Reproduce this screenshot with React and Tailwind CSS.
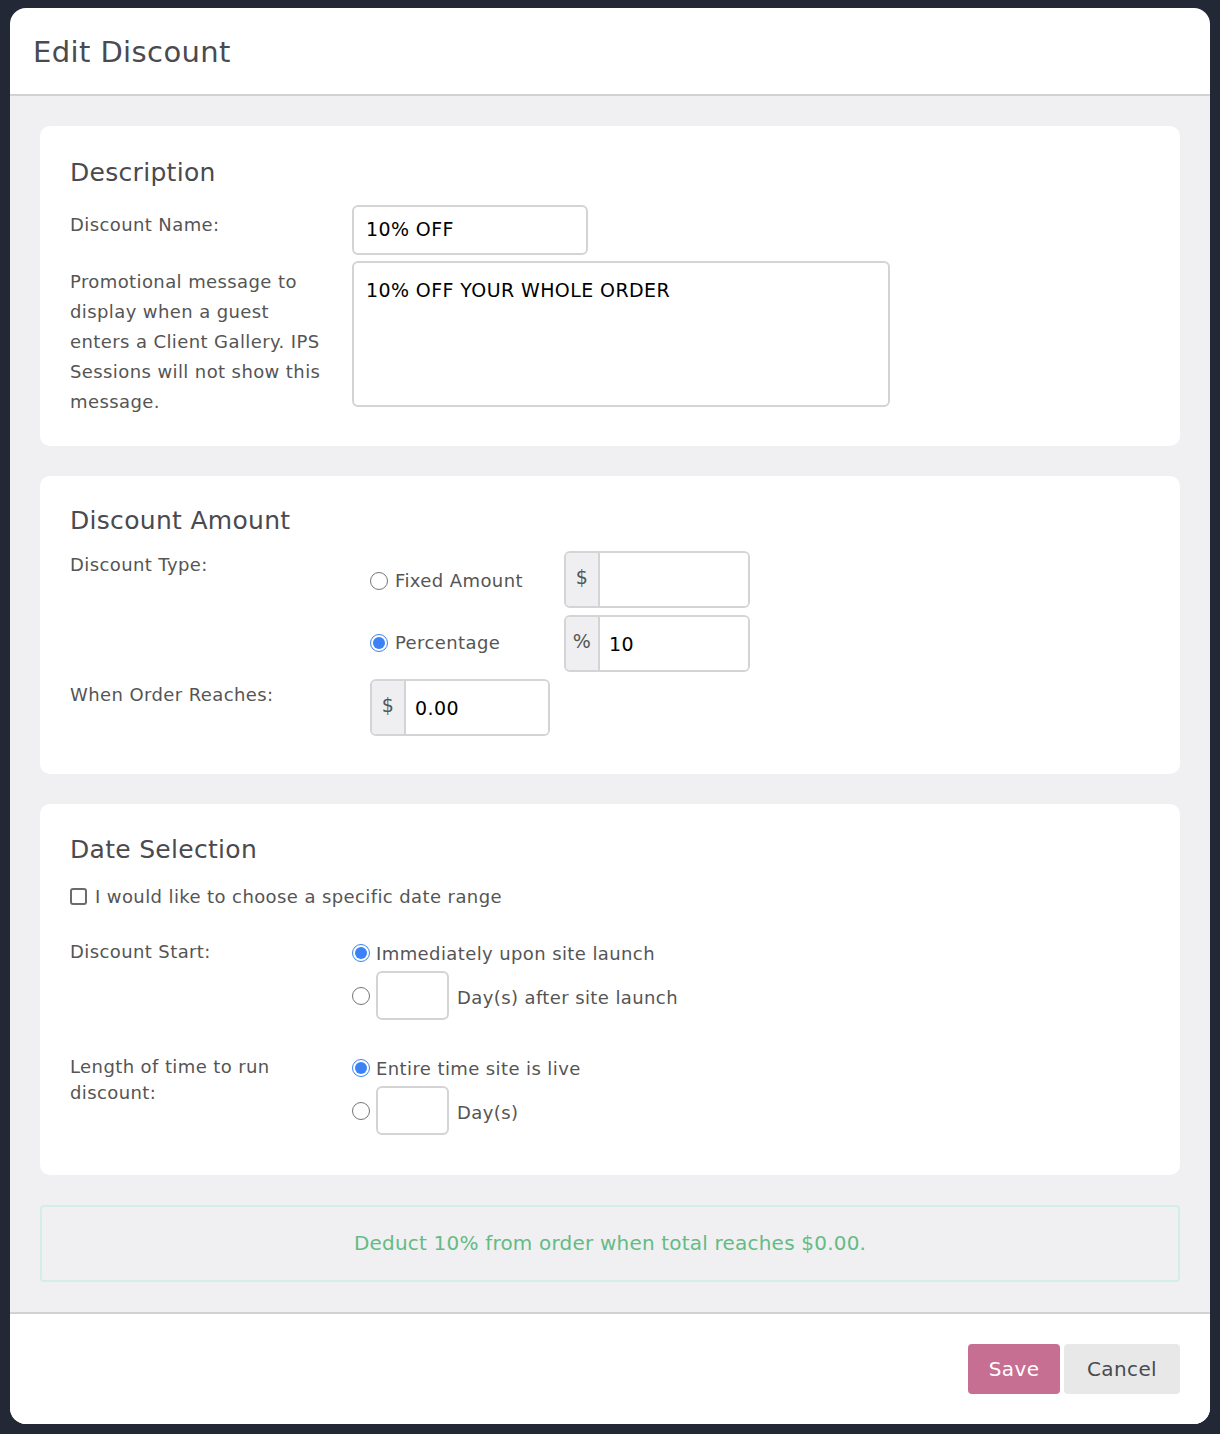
import React from 'react';

const font = { fontFamily: '"DejaVu Sans", "Noto Sans", sans-serif' };

const Radio = ({ checked }) => (
  <span
    className={
      'inline-flex h-[18px] w-[18px] shrink-0 items-center justify-center rounded-full border ' +
      (checked ? 'border-[#3b82f6] bg-white' : 'border-[#767676] bg-white')
    }
  >
    {checked && <span className="h-[12px] w-[12px] rounded-full bg-[#3b82f6]" />}
  </span>
);

const AddonInput = ({ addon, value, width }) => (
  <div className={'flex h-[57px] overflow-hidden rounded-md border-2 border-[#d4d4d6] ' + width}>
    <div className="flex w-[34px] items-start justify-center bg-[#efeff1] pt-[10px] text-[19px] text-[#555] border-r-2 border-[#d4d4d6]">
      {addon}
    </div>
    <div className="flex-1 bg-white px-[9px] pt-[13px] text-[19px] text-black">{value}</div>
  </div>
);

const SmallBox = () => (
  <div className="h-[49px] w-[73px] rounded-md border-2 border-[#d4d4d6] bg-white" />
);

const Card = ({ title, children, className = '' }) => (
  <section className={'rounded-[10px] bg-white px-[30px] ' + className}>
    <h2 className="text-[25px] tracking-[0.3px] text-[#4a4a4f]">{title}</h2>
    {children}
  </section>
);

export default function App() {
  return (
    <div className="min-h-[1434px] bg-[#222836] pt-[8px] tracking-[0.4px]" style={font}>
      <div className="mx-[10px] overflow-hidden rounded-[16px] bg-white">
        <header className="flex h-[88px] items-center border-b-2 border-[#d2d2d4] px-[23px] pt-[4px]">
          <h1 className="text-[29px] text-[#4a4a4f]">Edit Discount</h1>
        </header>

        <div className="flex flex-col gap-[30px] bg-[#f0f0f2] px-[30px] pt-[30px] pb-[30px]">
          <Card title="Description" className="pt-[28px] pb-[29px]">
            <div className="mt-[13px] grid grid-cols-[282px_1fr] gap-y-[6px] text-[18px] text-[#555]">
              <div className="pt-[6px]">Discount Name:</div>
              <div className="flex h-[50px] w-[236px] items-center rounded-md border-2 border-[#d4d4d6] px-[12px] text-[19px] text-black">
                10% OFF
              </div>
              <div className="pt-[6px] pr-[18px] leading-[30px]">
                Promotional message to display when a guest enters a Client Gallery. IPS Sessions will not show this message.
              </div>
              <div className="h-[146px] w-[538px] rounded-md border-2 border-[#d4d4d6] px-[12px] pt-[13px] text-[19px] text-black">
                10% OFF YOUR WHOLE ORDER
              </div>
            </div>
          </Card>

          <Card title="Discount Amount" className="pt-[26px] pb-[38px]">
            <div className="mt-[12px] grid grid-cols-[300px_194px_1fr] text-[18px] text-[#555]">
              <div>Discount Type:</div>
              <div className="flex items-center gap-[7px] pt-[16px] self-start">
                <Radio />
                <span>Fixed Amount</span>
              </div>
              <AddonInput addon="$" value="" width="w-[186px]" />

              <div />
              <div className="flex items-center gap-[7px] pt-[21px] self-start">
                <Radio checked />
                <span>Percentage</span>
              </div>
              <div className="mt-[7px]">
                <AddonInput addon="%" value="10" width="w-[186px]" />
              </div>

              <div className="pt-[9px]">When Order Reaches:</div>
              <div className="col-span-2 mt-[7px]">
                <AddonInput addon="$" value="0.00" width="w-[180px]" />
              </div>
            </div>
          </Card>

          <Card title="Date Selection" className="pt-[27px] pb-[40px]">
            <label className="mt-[14px] flex items-center gap-[8px] text-[18px] text-[#555]">
              <span className="h-[17px] w-[17px] rounded-[3px] border-2 border-[#6b6b6b] bg-white" />
              I would like to choose a specific date range
            </label>

            <div className="mt-[28px] grid grid-cols-[282px_1fr] text-[18px] text-[#555]">
              <div>Discount Start:</div>
              <div className="flex flex-col">
                <div className="flex items-center gap-[6px] pt-[2px]">
                  <Radio checked />
                  <span>Immediately upon site launch</span>
                </div>
                <div className="mt-[4px] flex items-start gap-[6px]">
                  <div className="pt-[14px]"><Radio /></div>
                  <SmallBox />
                  <span className="pl-[2px] pt-[13px]">Day(s) after site launch</span>
                </div>
              </div>

              <div className="mt-[34px] pr-[40px] leading-[26px]">Length of time to run discount:</div>
              <div className="mt-[34px] flex flex-col">
                <div className="flex items-center gap-[6px] pt-[1px]">
                  <Radio checked />
                  <span>Entire time site is live</span>
                </div>
                <div className="mt-[4px] flex items-start gap-[6px]">
                  <div className="pt-[14px]"><Radio /></div>
                  <SmallBox />
                  <span className="pl-[2px] pt-[13px]">Day(s)</span>
                </div>
              </div>
            </div>
          </Card>

          <div className="flex h-[77px] items-center justify-center rounded-[4px] border-2 border-[#d3eee2] text-[20px] tracking-[0.2px] text-[#64bb84]">
            Deduct 10% from order when total reaches $0.00.
          </div>
        </div>

        <footer className="flex h-[112px] items-center justify-end gap-[4px] border-t-2 border-[#d2d2d4] bg-white px-[30px]">
          <button className="h-[50px] w-[92px] rounded-[4px] bg-[#c76e93] text-[20px] text-white">Save</button>
          <button className="h-[50px] w-[116px] rounded-[4px] bg-[#e8e8e8] text-[20px] text-[#4a4a4f]">Cancel</button>
        </footer>
      </div>
    </div>
  );
}
